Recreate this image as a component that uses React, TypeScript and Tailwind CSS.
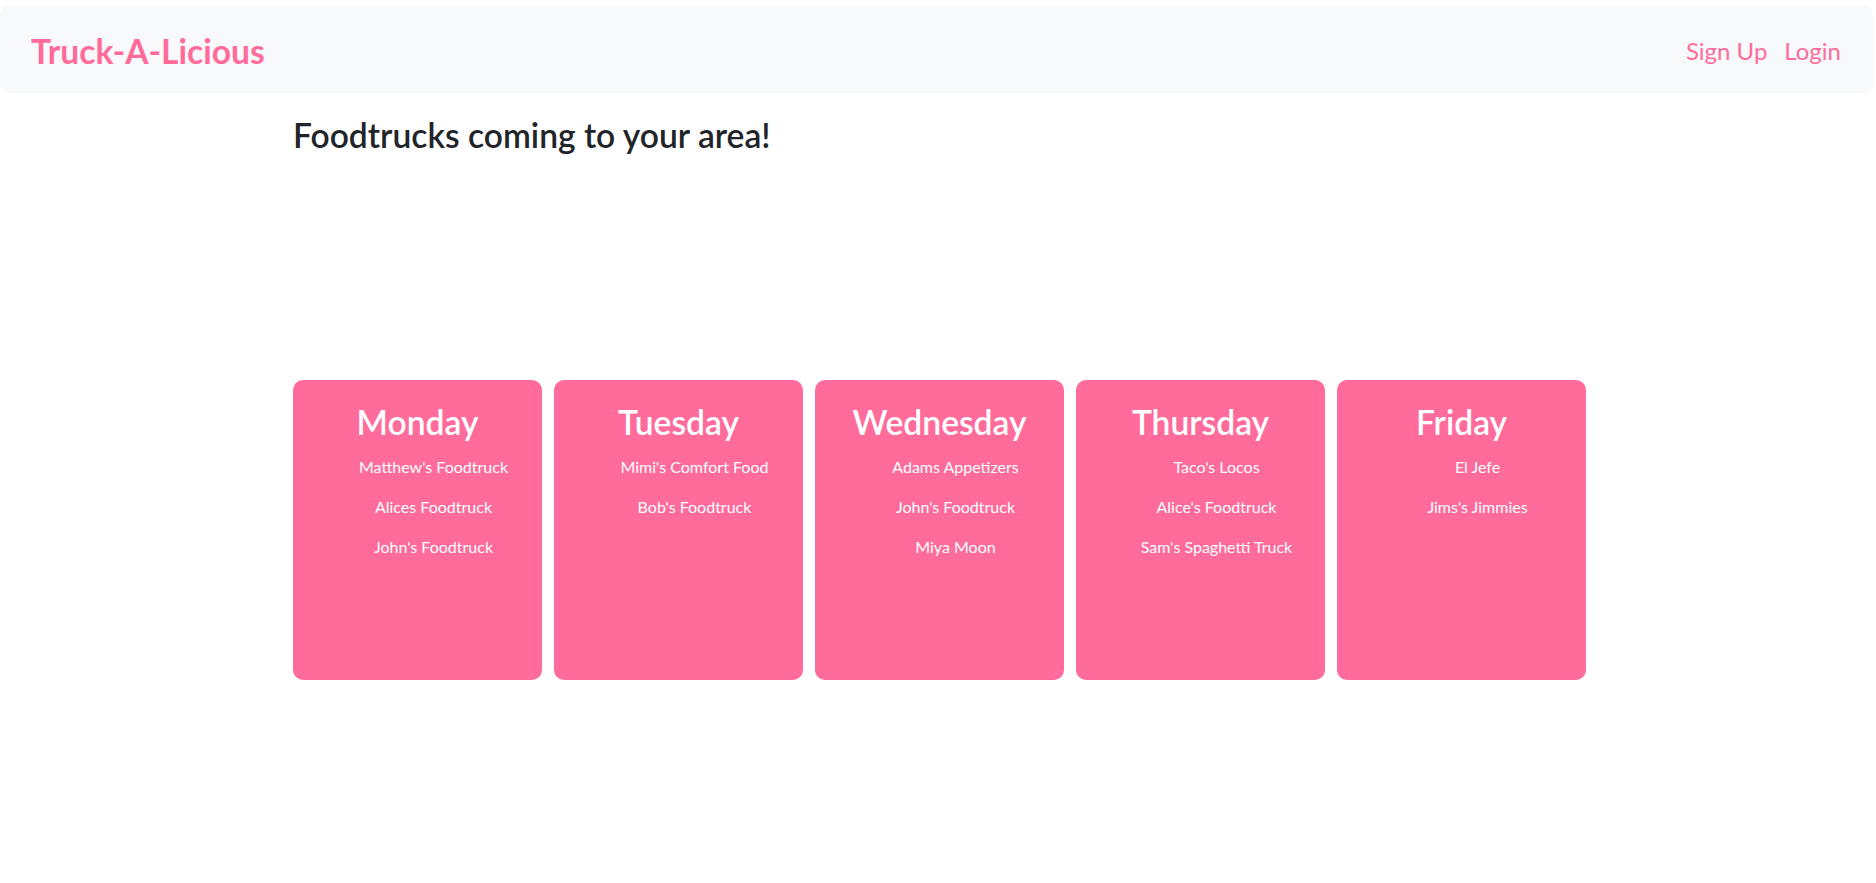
import React from "react";

const days: { day: string; trucks: string[] }[] = [
  { day: "Monday", trucks: ["Matthew's Foodtruck", "Alices Foodtruck", "John's Foodtruck"] },
  { day: "Tuesday", trucks: ["Mimi's Comfort Food", "Bob's Foodtruck"] },
  { day: "Wednesday", trucks: ["Adams Appetizers", "John's Foodtruck", "Miya Moon"] },
  { day: "Thursday", trucks: ["Taco's Locos", "Alice's Foodtruck", "Sam's Spaghetti Truck"] },
  { day: "Friday", trucks: ["El Jefe", "Jims's Jimmies"] },
];

export default function App() {
  return (
    <div className="min-h-screen bg-white font-['Lato','Open_Sans',sans-serif]">
      <nav className="mt-[5px] mr-[3px] h-[88px] rounded-[10px] bg-[#f8f9fa] flex items-center justify-between pl-[31px] pr-[32px] pt-[4px]">
        <a className="text-[33.6px] leading-[1.2] font-bold text-[#ff6b9b]">Truck-A-Licious</a>
        <div className="flex gap-[17px] text-[24px] leading-[1.5] text-[#ff6b9b]">
          <a>Sign Up</a>
          <a>Login</a>
        </div>
      </nav>
      <main className="ml-[293px] w-[1295px]">
        <h3 className="mt-[22px] text-[33.6px] leading-[1.2] font-semibold text-[#212529]">
          Foodtrucks coming to your area!
        </h3>
        <div className="mt-[225px] flex gap-[12px]">
          {days.map((d) => (
            <div key={d.day} className="w-[249px] h-[300px] rounded-[10px] bg-[#ff6b9b] pt-[22px] text-white">
              <h3 className="text-center text-[33.6px] leading-[1.2] font-semibold mb-[4px]">{d.day}</h3>
              <ul className="pl-[32px] text-center text-[16px] leading-[40px]">
                {d.trucks.map((t) => (
                  <li key={t}>{t}</li>
                ))}
              </ul>
            </div>
          ))}
        </div>
      </main>
    </div>
  );
}
